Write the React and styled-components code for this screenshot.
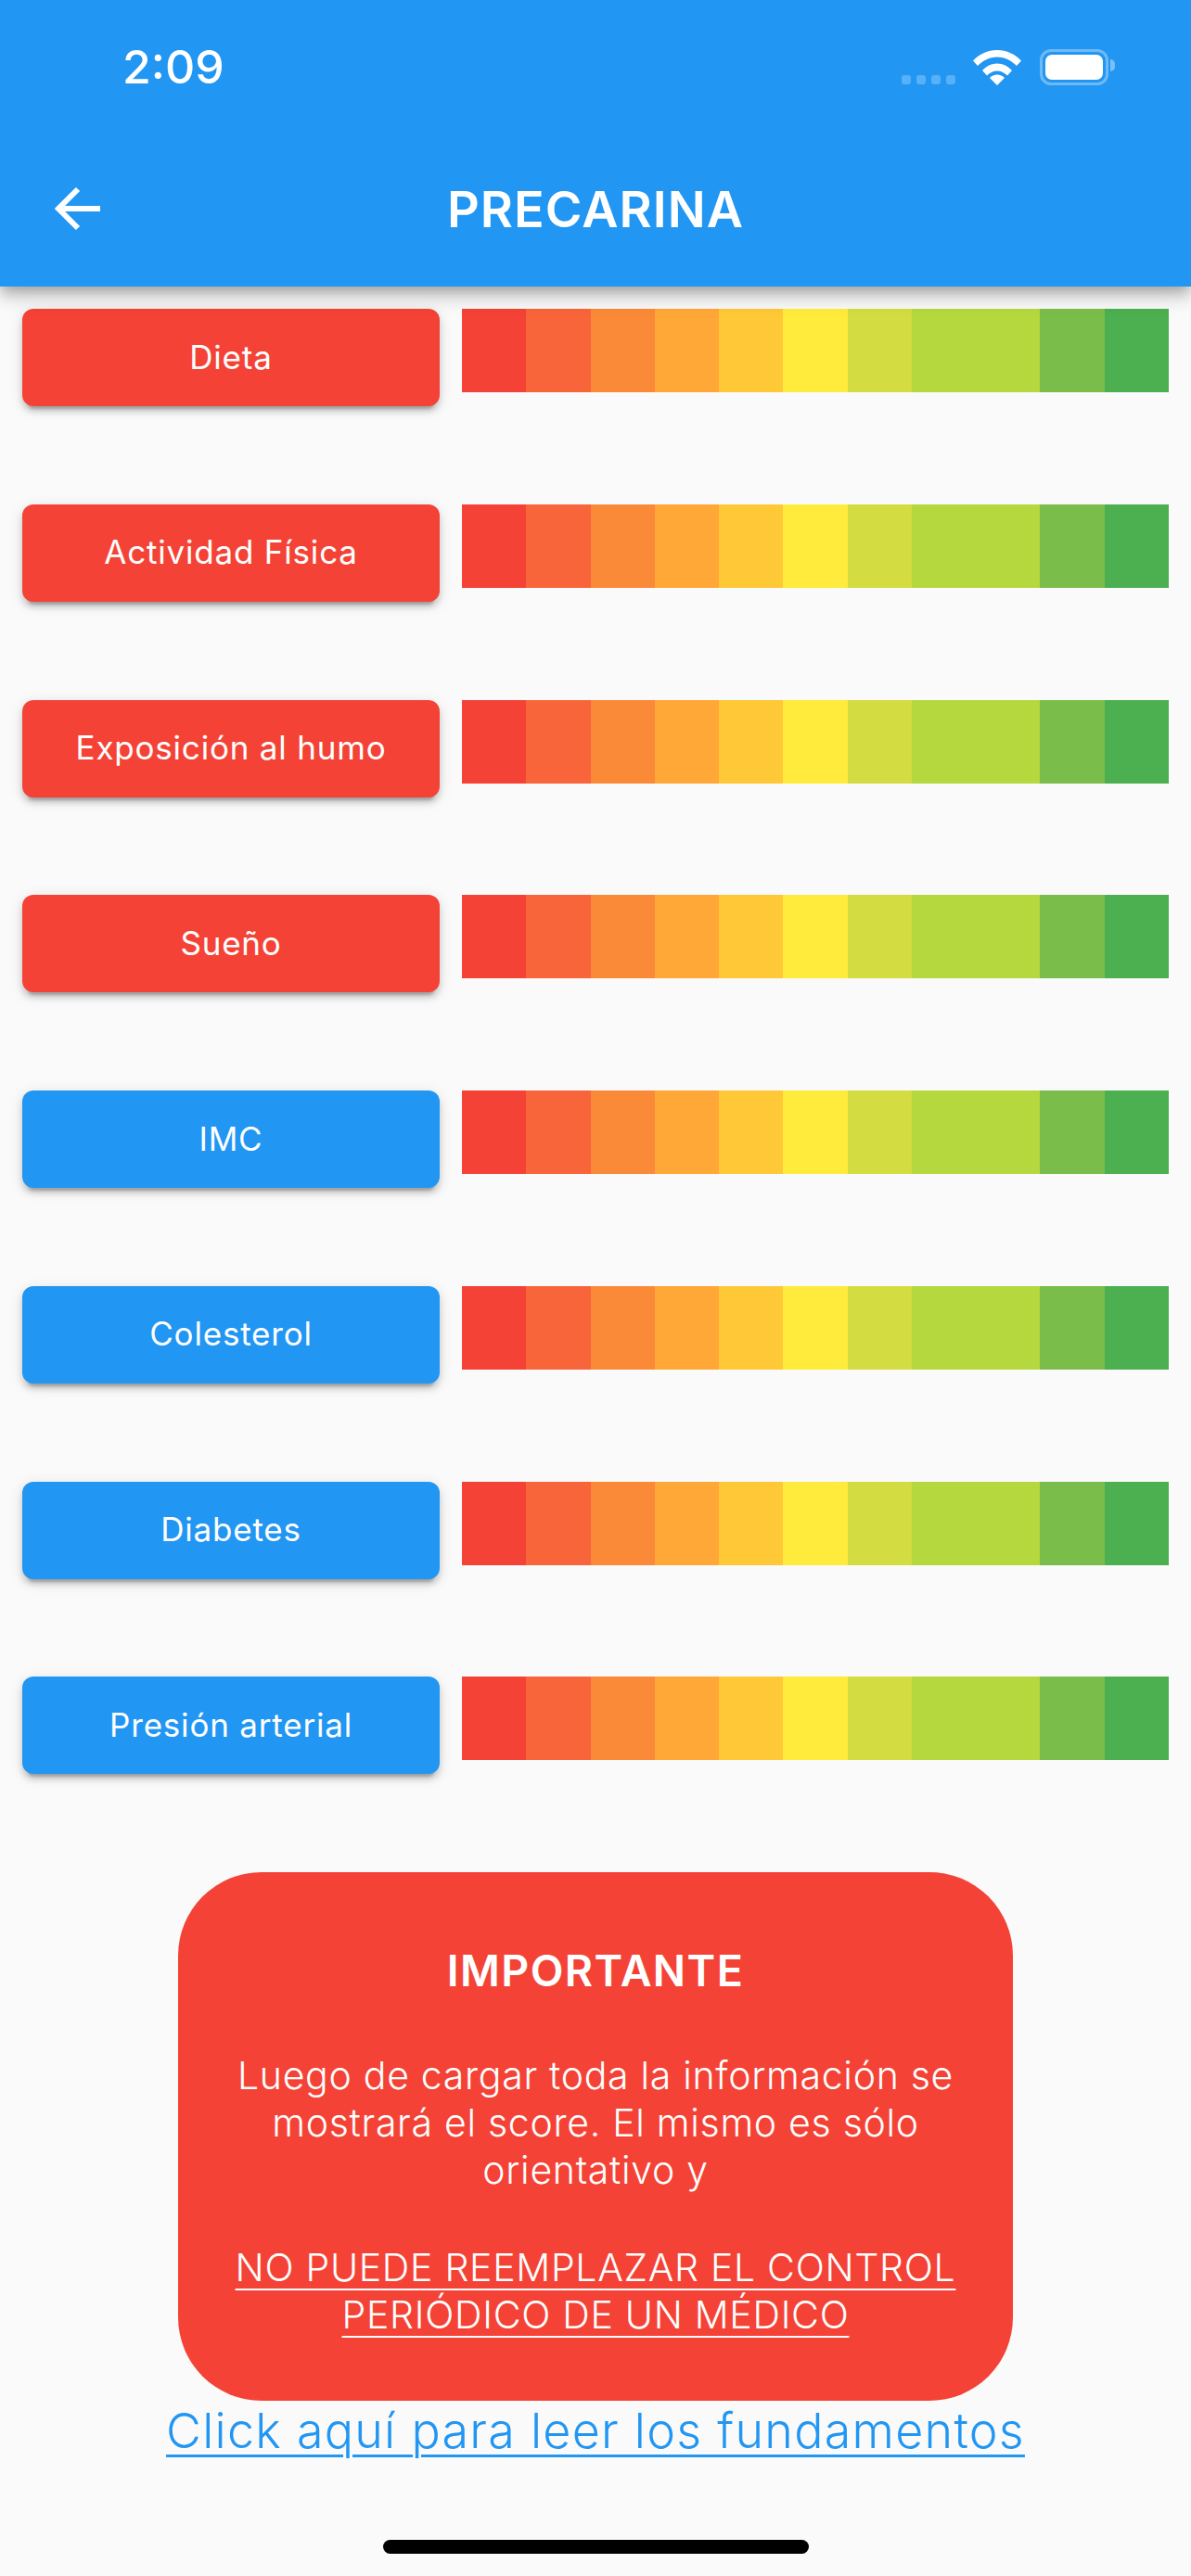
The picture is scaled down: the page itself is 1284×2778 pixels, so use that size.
import React from 'react';
import styled, { createGlobalStyle } from 'styled-components';

const SCALE = ['#F44336', '#F9653A', '#FB8A38', '#FFA737', '#FFC837', '#FFEB3B', '#D3DC40', '#B5D83F', '#B5D83F', '#7BBD4A', '#4CAF50'];

const ROWS = [
  { label: 'Dieta', tone: 'red' },
  { label: 'Actividad Física', tone: 'red' },
  { label: 'Exposición al humo', tone: 'red' },
  { label: 'Sueño', tone: 'red' },
  { label: 'IMC', tone: 'blue' },
  { label: 'Colesterol', tone: 'blue' },
  { label: 'Diabetes', tone: 'blue' },
  { label: 'Presión arterial', tone: 'blue' },
];

export default function App() {
  return (
    <Page>
      <GlobalStyle />
      <Header>
        <StatusBar>
          <Time>2:09</Time>
          <StatusIcons>
            <Signal>
              <i /><i /><i /><i />
            </Signal>
            <WifiIcon />
            <Battery>
              <BatteryFill />
            </Battery>
          </StatusIcons>
        </StatusBar>
        <Toolbar>
          <BackIcon />
          <Title>PRECARINA</Title>
        </Toolbar>
      </Header>
      <Rows>
        {ROWS.map((row) => (
          <Row key={row.label}>
            <FactorButton $tone={row.tone}>{row.label}</FactorButton>
            <Bar>
              {SCALE.map((color, i) => (
                <Segment key={i} $color={color} />
              ))}
            </Bar>
          </Row>
        ))}
      </Rows>
      <Notice>
        <NoticeTitle>IMPORTANTE</NoticeTitle>
        <NoticeText>
          Luego de cargar toda la información se mostrará el score. El mismo es sólo orientativo y
        </NoticeText>
        <NoticeWarning>NO PUEDE REEMPLAZAR EL CONTROL PERIÓDICO DE UN MÉDICO</NoticeWarning>
      </Notice>
      <FundamentosLink>Click aquí para leer los fundamentos</FundamentosLink>
      <HomeIndicator />
    </Page>
  );
}

function WifiIcon() {
  return (
    <svg width="52" height="38" viewBox="0 0 52 38" fill="#fff">
      <path d="M0 11.5C6.5 4.5 15.5 0 26 0s19.5 4.500 26 11.500l-5 5.500C41.500 11.500 34.500 7.500 26 7.500S10.500 11.500 5 17z" />
      <path d="M10 22c4-4.500 9.500-7.500 16-7.500S38 17.500 42 22l-5 5.500c-3-3-6.500-5-11-5s-8 2-11 5z" />
      <path d="M18 30c2-2 5-3.500 8-3.500s6 1.500 8 3.500l-8 8z" />
    </svg>
  );
}

function BackIcon() {
  return (
    <svg width="50" height="48" viewBox="0 0 50 48" fill="none" stroke="#fff" strokeWidth="6">
      <path d="M49 24H5" />
      <path d="M25 3 4 24l21 21" />
    </svg>
  );
}

const GlobalStyle = createGlobalStyle`
  html, body {
    margin: 0;
    padding: 0;
    background: #fafafa;
  }
`;

const Page = styled.div`
  position: relative;
  width: 1284px;
  height: 2778px;
  overflow: hidden;
  background: #fafafa;
  font-family: Inter, "Liberation Sans", sans-serif;
`;

const Header = styled.header`
  position: relative;
  z-index: 1;
  height: 309px;
  background: #2196f3;
  box-shadow: 0 6px 12px -3px rgba(0, 0, 0, 0.2), 0 12px 15px 0 rgba(0, 0, 0, 0.14), 0 3px 30px 0 rgba(0, 0, 0, 0.12);
`;

const StatusBar = styled.div`
  display: flex;
  align-items: center;
  justify-content: space-between;
  height: 144px;
  padding: 0 89px 0 132px;
`;

const Time = styled.span`
  font-size: 50px;
  font-weight: 550;
  color: #fff;
`;

const StatusIcons = styled.div`
  display: flex;
  align-items: flex-end;
  gap: 20px;
`;

const Signal = styled.div`
  display: flex;
  gap: 6px;
  margin-right: -1px;
  margin-bottom: 1px;

  i {
    display: block;
    width: 10px;
    height: 10px;
    border-radius: 3px;
    background: rgba(255, 255, 255, 0.25);
  }
`;

const Battery = styled.div`
  position: relative;
  box-sizing: border-box;
  width: 74px;
  height: 39px;
  padding: 3px;
  border: 3px solid rgba(255, 255, 255, 0.35);
  border-radius: 12px;

  &::after {
    content: '';
    position: absolute;
    top: 8px;
    right: -10px;
    width: 5px;
    height: 13px;
    border-radius: 0 6px 6px 0;
    background: rgba(255, 255, 255, 0.4);
  }
`;

const BatteryFill = styled.div`
  height: 100%;
  border-radius: 7px;
  background: #fff;
`;

const Toolbar = styled.div`
  position: relative;
  display: flex;
  align-items: center;
  justify-content: center;
  height: 165px;

  svg {
    position: absolute;
    left: 59px;
    top: 57px;
  }
`;

const Title = styled.h1`
  margin: 0 0 3px;
  font-size: 54px;
  font-weight: 600;
  letter-spacing: 1px;
  color: #fff;
`;

const Rows = styled.div`
  display: flex;
  flex-direction: column;
  gap: 105.75px;
  padding: 24px 24px 105.75px;
`;

const Row = styled.div`
  display: flex;
  align-items: flex-start;
  gap: 24px;
  height: 105px;
`;

const FactorButton = styled.button`
  flex: none;
  width: 450px;
  height: 105px;
  padding: 0 0 2px;
  border: 0;
  border-radius: 12px;
  background: ${(props) => (props.$tone === 'red' ? '#f44336' : '#2196f3')};
  box-shadow: 0 9px 3px -6px rgba(0, 0, 0, 0.2), 0 6px 6px 0 rgba(0, 0, 0, 0.14), 0 3px 15px 0 rgba(0, 0, 0, 0.12);
  font-family: Inter, sans-serif;
  font-size: 35px;
  letter-spacing: 0.8px;
  color: #fff;
`;

const Bar = styled.div`
  display: grid;
  grid-template-columns: repeat(11, 1fr);
  width: 762px;
  height: 90px;
`;

const Segment = styled.div`
  background: ${(props) => props.$color};
`;

const Notice = styled.section`
  box-sizing: border-box;
  width: 900px;
  height: 570px;
  margin: 0 auto;
  padding: 78px 56px 0;
  border-radius: 90px;
  background: #f44336;
  color: #fff;
  text-align: center;
`;

const NoticeTitle = styled.h2`
  margin: 0 0 60px;
  font-size: 46.5px;
  line-height: 56px;
  font-weight: 600;
  letter-spacing: 1.4px;
`;

const NoticeText = styled.p`
  margin: 0 0 54px;
  font-size: 41px;
  line-height: 51px;
  font-weight: 330;
  letter-spacing: 0.7px;
`;

const NoticeWarning = styled.p`
  margin: 0;
  font-size: 41px;
  line-height: 51px;
  font-weight: 330;
  letter-spacing: 0.7px;
  text-decoration: underline;
  text-decoration-thickness: 2px;
  text-underline-offset: 8px;
`;

const FundamentosLink = styled.a`
  display: block;
  margin-top: 0;
  font-size: 52px;
  line-height: 66px;
  font-weight: 340;
  letter-spacing: 1.25px;
  text-align: center;
  text-decoration: underline;
  text-decoration-thickness: 3px;
  text-underline-offset: 7px;
  color: #2196f3;
`;

const HomeIndicator = styled.div`
  position: absolute;
  left: 413px;
  bottom: 24px;
  width: 459px;
  height: 15px;
  border-radius: 8px;
  background: #000;
`;
